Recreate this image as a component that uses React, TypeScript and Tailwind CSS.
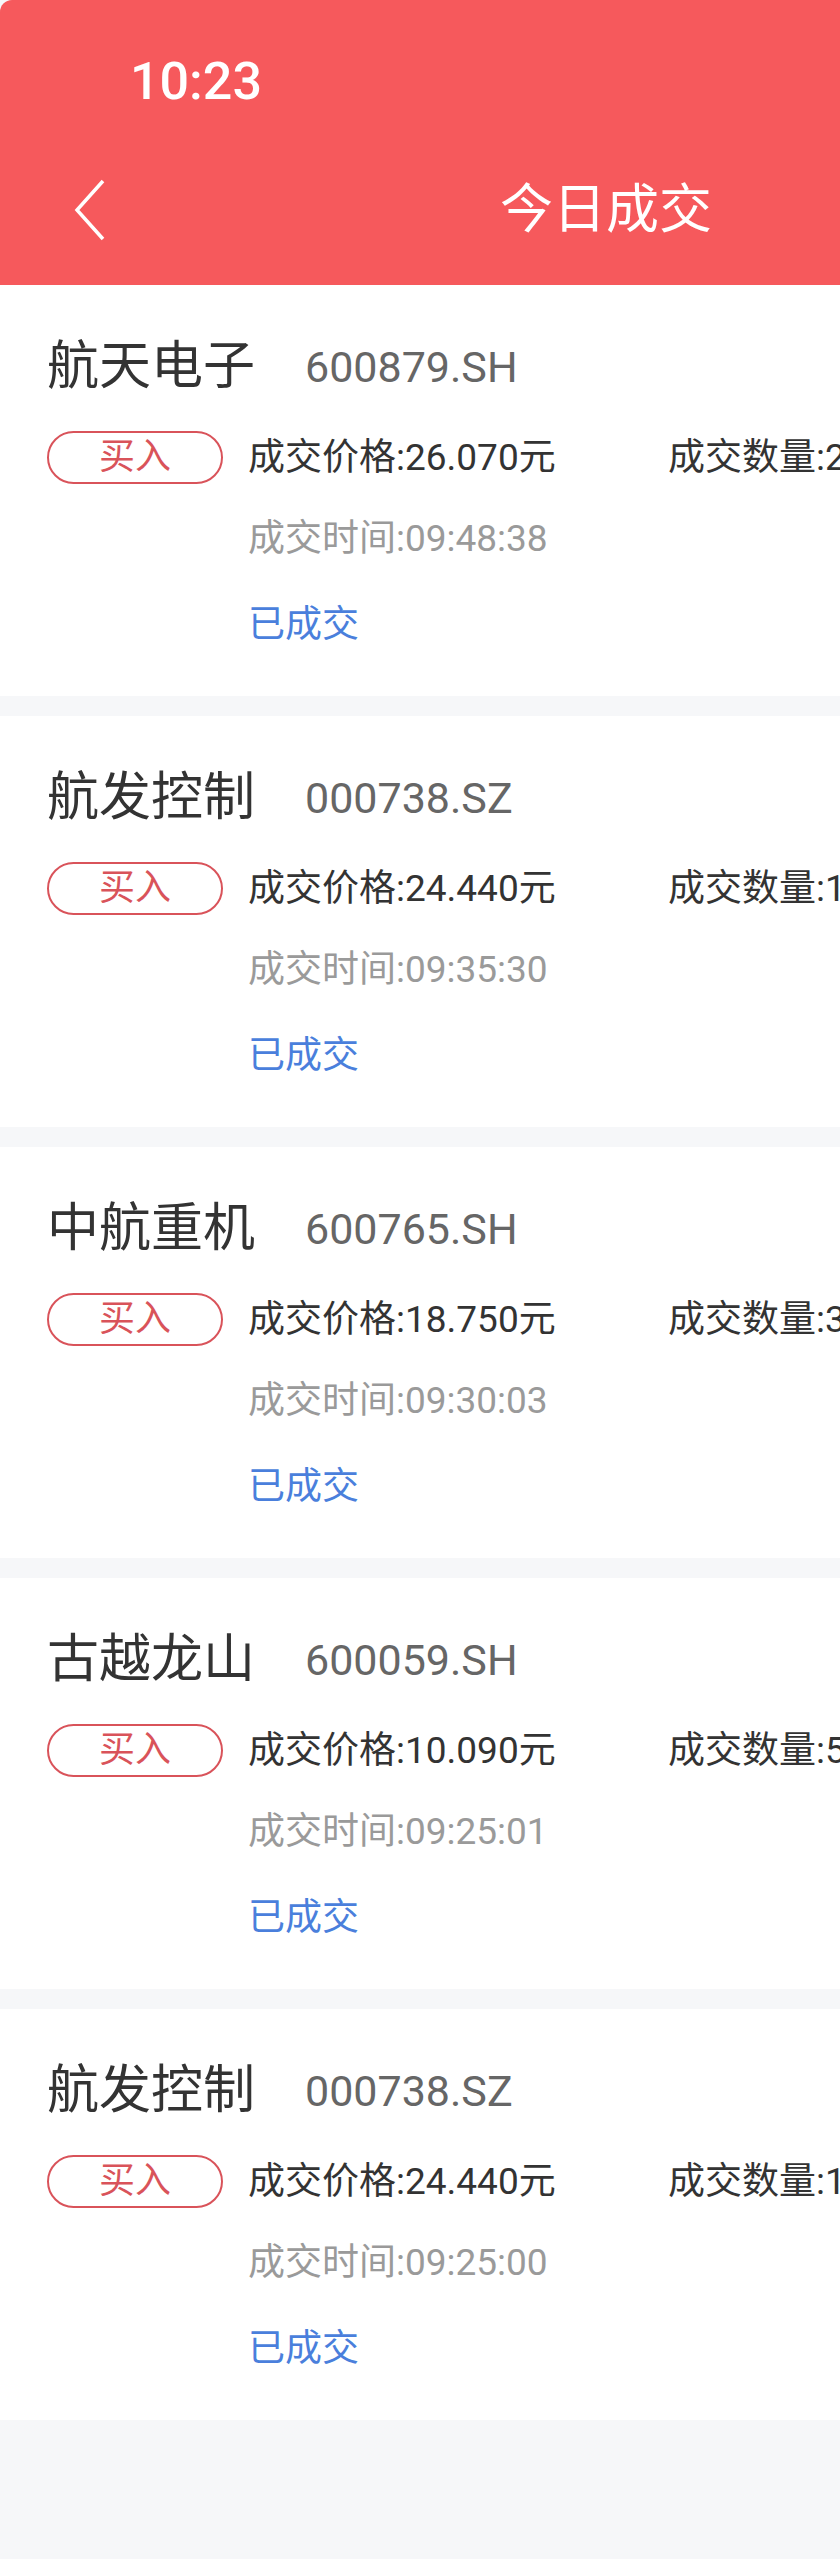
import React from "react";

const deals = [
  { name: "航天电子", code: "600879.SH", price: "26.070", qty: "2", time: "09:48:38" },
  { name: "航发控制", code: "000738.SZ", price: "24.440", qty: "1", time: "09:35:30" },
  { name: "中航重机", code: "600765.SH", price: "18.750", qty: "3", time: "09:30:03" },
  { name: "古越龙山", code: "600059.SH", price: "10.090", qty: "5", time: "09:25:01" },
  { name: "航发控制", code: "000738.SZ", price: "24.440", qty: "1", time: "09:25:00" },
];

function DealCard({ d }: { d: (typeof deals)[number] }) {
  return (
    <div className="bg-white h-[411px] pt-[54px] pl-[47px] overflow-hidden">
      <div className="flex items-center h-[56px]">
        <span className="text-[52px] leading-none text-[#333333]">{d.name}</span>
        <span className="ml-[50px] text-[43px] leading-none text-[#666666]">{d.code}</span>
      </div>
      <div className="flex items-center mt-[35px] h-[54px] whitespace-nowrap">
        <div className="w-[176px] h-[53px] shrink-0 rounded-full border-2 border-[#d9535a] flex items-center justify-center text-[36px] leading-none text-[#d9535a]">
          买入
        </div>
        <span className="ml-[25px] w-[420px] shrink-0 text-[37px] leading-none text-[#333333]">
          成交价格:{d.price}元
        </span>
        <span className="text-[37px] leading-none text-[#333333]">
          成交数量:{d.qty}00股
        </span>
      </div>
      <div className="pl-[201px] mt-[36px] text-[37px] leading-none text-[#9a9a9a]">
        成交时间:{d.time}
      </div>
      <div className="pl-[201px] mt-[49px] text-[37px] leading-none text-[#4a7fdc]">
        已成交
      </div>
    </div>
  );
}

export default function App() {
  return (
    <div
      className="w-[840px] min-h-[2559px] bg-[#f6f7f9] overflow-hidden"
      style={{ fontFamily: "Roboto, 'Noto Sans CJK SC', sans-serif" }}
    >
      <header className="bg-[#f6595c] h-[285px] rounded-tl-[12px] text-white">
        <div className="h-[170px] pl-[130px] pt-[56px] text-[52px] leading-none font-medium">
          10:23
        </div>
        <div className="flex items-center h-[80px]">
          <svg
            className="ml-[70px]"
            width="40"
            height="66"
            viewBox="0 0 40 66"
            fill="none"
          >
            <path d="M33 4 L7 33 L33 62" stroke="white" strokeWidth="3.5" />
          </svg>
          <span className="ml-[390px] text-[53px] leading-none">今日成交</span>
        </div>
      </header>
      <div className="flex flex-col gap-[20px]">
        {deals.map((d, i) => (
          <DealCard key={i} d={d} />
        ))}
      </div>
    </div>
  );
}
